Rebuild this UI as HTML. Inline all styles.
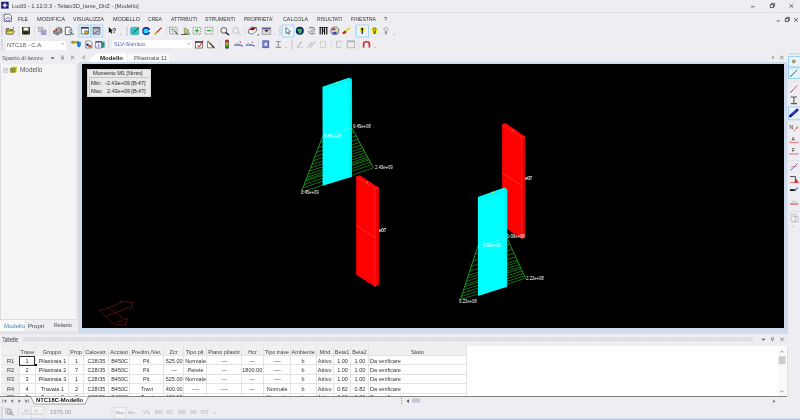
<!DOCTYPE html>
<html><head><meta charset="utf-8">
<style>
*{box-sizing:border-box}
html,body{margin:0;padding:0}
body{width:800px;height:420px;overflow:hidden;position:relative;background:#eeeef2;font-family:"Liberation Sans",sans-serif;color:#1e1e1e}
.a{position:absolute}
body>*{will-change:transform}
.t{position:absolute;white-space:nowrap;line-height:1}
#menu .t{font-size:6.2px;color:#333;top:15.8px;transform-origin:0 0}
.th{font-size:5.5px;color:#444;text-align:center}
.td{font-size:5.8px;color:#333;text-align:center;transform:scaleX(0.95);transform-origin:50% 0}
.tl{transform-origin:0 0}
.lbl{font-size:5.3px;color:#fff;transform:scaleX(0.8);transform-origin:0 0;z-index:3}
svg{position:absolute;left:0;top:0;overflow:visible}
</style></head><body>


<!-- ============ TITLE BAR ============ -->
<div class="t" style="left:12px;top:4px;font-size:5.8px;color:#444">Ludi3 - 1.12.0.3 - Telaio3D_lame_DirZ - [Modello]</div>
<div class="a" style="left:0;top:12px;width:800px;height:1px;background:#dddde6"></div>
<!-- ============ MENU ============ -->
<div id="menu">
<div class="t" style="left:17.7px;transform:scaleX(0.764)">FILE</div>
<div class="t" style="left:36.7px;transform:scaleX(0.924)">MODIFICA</div>
<div class="t" style="left:72.7px;transform:scaleX(0.874)">VISUALIZZA</div>
<div class="t" style="left:112.7px;transform:scaleX(0.891)">MODELLO</div>
<div class="t" style="left:147.7px;transform:scaleX(0.813)">CREA</div>
<div class="t" style="left:170.7px;transform:scaleX(0.824)">ATTRIBUTI</div>
<div class="t" style="left:205.29999999999998px;transform:scaleX(0.835)">STRUMENTI</div>
<div class="t" style="left:244.2px;transform:scaleX(0.802)">PROPRIETA'</div>
<div class="t" style="left:282.7px;transform:scaleX(0.864)">CALCOLA</div>
<div class="t" style="left:316.7px;transform:scaleX(0.825)">RISULTATI</div>
<div class="t" style="left:350.7px;transform:scaleX(0.815)">FINESTRA</div>
<div class="t" style="left:383.7px;transform:scaleX(0.900)">?</div>
</div>
<!-- ============ TOOLBAR combos ============ -->
<div class="a" style="left:4.5px;top:39.5px;width:61.5px;height:10.5px;background:#fff;border:0.5px solid #ececf0"></div>
<div class="t" style="left:7px;top:42.2px;font-size:6px;color:#555">NTC18 - C.A.</div>
<div class="a" style="left:110.5px;top:39.3px;width:82px;height:9.5px;background:#fff;border:0.5px solid #ececf0"></div>
<div class="t" style="left:113.6px;top:42.2px;font-size:5.5px;color:#5151c8">SLV-Sismico</div>

<!-- ============ PANEL HEADER ============ -->
<div class="t" style="left:2px;top:55.5px;font-size:5.8px;color:#555">Spazio di lavoro</div>
<!-- tabs -->
<svg width="800" height="420" style="z-index:1">
  <path d="M88.5,62 L96,53.5 L127,53.5 L127,62 Z" fill="#fff"/>
  <path d="M127.5,62 L127.5,53 L170,53 L170,62" fill="#fafafc" stroke="#e2e2ea" stroke-width="0.5"/>
</svg>
<div class="t" style="left:100px;top:54.8px;font-size:6.1px;font-weight:bold;color:#222;z-index:2">Modello</div>
<div class="t" style="left:134px;top:55.3px;font-size:6px;color:#555;z-index:2">Pilastrata 11</div>

<!-- ============ LEFT PANEL ============ -->
<div class="a" style="left:0;top:64.4px;width:76px;height:255.6px;background:#f5f5f7;border-left:0.5px solid #dcdce2;border-bottom:0.5px solid #dcdce2"></div>
<div class="a" style="left:76px;top:64px;width:2px;height:267px;background:#e7e7eb"></div>
<div class="t" style="left:19.5px;top:67px;font-size:6.4px;color:#555">Modello</div>
<div class="a" style="left:0;top:320px;width:24px;height:10.5px;background:#fafafb"></div>
<div class="a" style="left:24px;top:320px;width:54px;height:10.5px;background:#eeeef2"></div>
<div class="t" style="left:3.5px;top:322.5px;font-size:6px;color:#3d7fb8">Modello</div>
<div class="t" style="left:28.3px;top:322.5px;font-size:6.1px;color:#444">Propri</div>
<div class="t" style="left:53.5px;top:322.7px;font-size:5.3px;color:#444">Relazio</div>

<!-- ============ VIEWPORT ============ -->
<div class="a" style="left:78px;top:64px;width:1px;height:267px;background:#dcdce4"></div>
<div class="a" style="left:79px;top:62px;width:708.5px;height:271.5px;background:#cfdbed"></div>
<div class="a" style="left:82px;top:64px;width:702.4px;height:263.8px;background:#000"></div>

<!-- ============ TABELLE ============ -->
<div class="a" style="left:0;top:331px;width:79px;height:2.5px;background:#e2e2e8"></div>
<div class="t" style="left:2px;top:336.8px;font-size:6.8px;color:#444;transform:scaleX(0.75);transform-origin:0 0">Tabelle</div>
<div class="a" style="left:0;top:345.8px;width:787px;height:50.5px;background:#fff;border-bottom:1px solid #888"></div>

<!-- ============ SHEET TABS / BOTTOM ============ -->
<div class="a" style="left:0;top:418px;width:800px;height:2px;background:#b9cbe6"></div>


<svg width="800" height="420" style="z-index:3">
<defs>
  <pattern id="grip" width="2" height="2" patternUnits="userSpaceOnUse">
    <rect x="0" y="0" width="1" height="1" fill="#c4c4cc"/>
    <rect x="1" y="1" width="1" height="1" fill="#c4c4cc"/>
  </pattern>
</defs>
<!-- title icon -->
<rect x="1.2" y="1.8" width="7.4" height="6.8" fill="#15156a"/>
<path d="M4.9,2.6 L7.8,5.2 L4.9,7.9 L2,5.2 Z" fill="#9b9be0"/>
<path d="M4.9,3.8 L6.4,5.2 L4.9,6.6 L3.4,5.2 Z" fill="#e8e8ff"/>
<!-- window controls -->
<g stroke="#555" stroke-width="0.9" fill="none">
  <line x1="750.9" y1="6.8" x2="754.6" y2="6.8"/>
  <rect x="770.4" y="4.6" width="3" height="3"/>
  <path d="M771.6,4.4 V3.4 H774.6 V6.4 H773.6"/>
  <path d="M789.6,4.1 L793.2,7.6 M793.2,4.1 L789.6,7.6"/>
  <line x1="776.8" y1="20.9" x2="779.8" y2="20.9"/>
  <rect x="785.3" y="18.6" width="3" height="3"/>
  <path d="M786.5,18.4 V17.4 H789.5 V20.4 H788.5"/>
  <path d="M794.2,18.1 L797.9,21.6 M797.9,18.1 L794.2,21.6"/>
</g>
<!-- menu doc icon -->
<path d="M4.2,14.2 H9.6 L11.4,16 V21.4 H4.2 Z" fill="#fff" stroke="#333" stroke-width="0.7"/>
<path d="M5.5,19.5 L8,16.8 L10.3,19.2 L7.8,21 Z" fill="none" stroke="#4a4ad0" stroke-width="0.8"/>
<!-- grips -->
<rect x="1" y="13.5" width="2" height="10" fill="url(#grip)"/>
<rect x="1" y="25.5" width="2" height="11" fill="url(#grip)"/>
<rect x="1" y="39" width="2" height="11" fill="url(#grip)"/>
<rect x="126" y="26" width="2" height="10" fill="url(#grip)"/>
<rect x="279" y="26" width="2" height="10" fill="url(#grip)"/>
<rect x="291" y="39.5" width="2" height="10" fill="url(#grip)"/>
<!-- separators -->
<g fill="#d6d6de">
  <rect x="18.2" y="26" width="0.7" height="10"/>
  <rect x="34.2" y="26" width="0.7" height="10"/>
  <rect x="49.2" y="26" width="0.7" height="10"/>
  <rect x="166.2" y="26" width="0.7" height="10"/>
  <rect x="217.4" y="26" width="0.7" height="10"/>
  <rect x="244" y="26" width="0.7" height="10"/>
  <rect x="355" y="26" width="0.7" height="10"/>
  <rect x="69.6" y="39.5" width="0.7" height="10"/>
  <rect x="108.2" y="39.5" width="0.7" height="10"/>
  <rect x="219.6" y="39.5" width="0.7" height="10"/>
  <rect x="258.3" y="39.5" width="0.7" height="10"/>
  <rect x="331.3" y="39.5" width="0.7" height="10"/>
  <rect x="358.5" y="39.5" width="0.7" height="10"/>
</g>
<!-- selected button boxes -->
<g fill="#e8f4fc" stroke="#98cdee" stroke-width="0.8">
  <rect x="79" y="25" width="11.5" height="12"/>
  <rect x="91" y="25" width="11.8" height="12"/>
  <rect x="282.2" y="25" width="11.8" height="12"/>
  <rect x="356.2" y="25" width="12.3" height="12"/>
</g>
<!-- TOOLBAR 1 icons -->
<!-- open folder -->
<path d="M6.2,28.5 H9 L10,29.5 H13 V34 H6.2 Z" fill="#b5b020" stroke="#333" stroke-width="0.6"/>
<path d="M7,31 H14.5 L13,34 H6.2 Z" fill="#e6e060" stroke="#333" stroke-width="0.5"/>
<circle cx="13.5" cy="27.8" r="0.6" fill="#111"/>
<!-- save -->
<rect x="22" y="27" width="8" height="7.5" fill="#3a3a10"/>
<rect x="23.5" y="27.6" width="5" height="3" fill="#f4f4f0"/>
<rect x="24" y="31.8" width="3.6" height="2.4" fill="#222"/>
<!-- copy -->
<rect x="38.2" y="27.2" width="4.6" height="4.4" fill="#fff" stroke="#6a6a7a" stroke-width="0.5"/>
<path d="M38.8,28.6 H42 M38.8,29.8 H42" stroke="#7a7a9a" stroke-width="0.45"/>
<rect x="41.2" y="30" width="4.8" height="4.5" fill="#e8e8f6" stroke="#4848a8" stroke-width="0.5"/>
<path d="M41.8,31.4 H45.4 M41.8,32.6 H45.4 M41.8,33.6 H45" stroke="#3a3ab8" stroke-width="0.45"/>
<!-- print -->
<path d="M55.5,29.2 L58.5,27.2 L61.8,28.4 L58.8,30.4 Z" fill="#fff" stroke="#222" stroke-width="0.55"/>
<path d="M53.6,31 L58.6,28.6 L62,30 L62,32.4 L57.4,34.8 L53.6,33.2 Z" fill="#b4b4b4" stroke="#222" stroke-width="0.6"/>
<path d="M53.8,31.1 L57.4,32.8 L62,30.3 M57.4,32.8 V34.6" fill="none" stroke="#333" stroke-width="0.5"/>
<circle cx="56.6" cy="30.8" r="0.75" fill="#e02828"/>
<!-- preview -->
<path d="M65.3,27.2 H70 L71,28.2 V34.7 H65.3 Z" fill="#fff" stroke="#222" stroke-width="0.7"/>
<circle cx="70.4" cy="31.5" r="1.6" fill="#bfe4ec" stroke="#2a5a68" stroke-width="0.6"/>
<path d="M71.5,32.6 L73.6,35" stroke="#222" stroke-width="0.8"/>
<!-- selected icon 1 -->
<rect x="81.2" y="27.2" width="7.2" height="6.8" fill="#fff" stroke="#333" stroke-width="0.6"/>
<rect x="81.2" y="27.2" width="7.2" height="1.4" fill="#1c2a6a"/>
<circle cx="86.2" cy="32.3" r="1.8" fill="#c8c020" stroke="#333" stroke-width="0.5"/>
<!-- selected icon 2 -->
<rect x="93" y="27.2" width="7" height="7" fill="#bcbcc8" stroke="#444" stroke-width="0.6"/>
<rect x="93" y="27.2" width="7" height="1.3" fill="#555"/>
<path d="M93.5,33.5 L99.5,30.5" stroke="#3a3ad0" stroke-width="0.7"/>
<path d="M99.5,28.5 L100.6,29.5" stroke="#d03030" stroke-width="0.7"/>
<!-- help arrow -->
<path d="M108.8,27 L108.8,33 L110.3,31.8 L111.6,33.8 L112.4,33.3 L111.3,31.3 L113,31.1 Z" fill="#111"/>
<text x="112.2" y="32.6" font-size="6.5" font-weight="bold" fill="#222" font-family="Liberation Sans">?</text>
<path d="M120.4,34 h1.4 l-0.7,0.7z" fill="#555"/>
<!-- teal cube/pen -->
<rect x="130.6" y="27.3" width="8.2" height="7.5" rx="1.5" fill="#30c8c8" stroke="#2a7a7a" stroke-width="0.4"/>
<path d="M131.5,34.5 L138.8,27.5" stroke="#222" stroke-width="0.9"/>
<path d="M131.3,34.6 L133,33" stroke="#e0e030" stroke-width="0.8"/>
<!-- globe -->
<circle cx="146.2" cy="31" r="3.9" fill="#0a1e9a"/>
<circle cx="146" cy="31" r="2.6" fill="#20d8f0"/>
<rect x="148.6" y="30" width="2" height="2.2" fill="#eeeef2"/>
<!-- pencil -->
<path d="M154.5,34.6 L161.5,27.6" stroke="#b02020" stroke-width="1.2"/>
<path d="M154.2,34.9 L156.5,32.6" stroke="#e0d040" stroke-width="1.3"/>
<!-- select grid -->
<g fill="none" stroke="#333" stroke-width="0.6" stroke-dasharray="1,0.8">
  <rect x="169.6" y="27.3" width="7.4" height="6.6"/>
</g>
<path d="M170.5,29.5 H176 M172.5,28 V33" stroke="#5a5" stroke-width="0.5"/>
<path d="M174,30.5 L178,34.7" stroke="#111" stroke-width="0.9"/>
<!-- hand/paint -->
<path d="M181.2,34.5 H187" stroke="#111" stroke-width="0.7"/>
<path d="M184,29 C184,27.5 186,27.5 186,29 L188.5,30 L188,33.5 H184.5 Z" fill="#c9c960" stroke="#555" stroke-width="0.5"/>
<rect x="187.6" y="33.2" width="2.2" height="1.8" fill="#20b0a0"/>
<!-- + box -->
<rect x="193.2" y="27.3" width="7.6" height="6.8" fill="none" stroke="#444" stroke-width="0.6" stroke-dasharray="1,0.9"/>
<path d="M195,30.7 H199 M197,28.7 V32.7" stroke="#20a020" stroke-width="1.1"/>
<!-- - box -->
<rect x="205.2" y="27.3" width="7.6" height="6.8" fill="none" stroke="#444" stroke-width="0.6" stroke-dasharray="1,0.9"/>
<path d="M206.8,30.7 H211.2" stroke="#20a020" stroke-width="1.1"/>
<!-- zoom in -->
<circle cx="223.8" cy="30.4" r="2.9" fill="#e8f4e8" stroke="#444" stroke-width="0.9"/>
<path d="M225.8,32.4 L229,35" stroke="#111" stroke-width="1.3"/>
<!-- zoom out grey -->
<circle cx="235.6" cy="30.4" r="2.9" fill="none" stroke="#b0b0b0" stroke-width="0.7"/>
<path d="M237.6,32.4 L240.8,35" stroke="#aaa" stroke-width="0.9"/>
<!-- 3D house -->
<path d="M248.4,30 L251.5,27.2 L256.5,27.5 L256.5,31 L252.5,34.2 L248.4,33 Z" fill="#f4f4f4" stroke="#333" stroke-width="0.6"/>
<path d="M249,30 L252,27.4 L256.4,27.5 L253.5,30.3 Z" fill="#8a1010"/>
<path d="M257.2,35.4 L258.8,33.8 V35.4 Z" fill="#333"/>
<!-- screen -->
<rect x="262" y="27.6" width="8.8" height="6.8" fill="#d6d6d6" stroke="#777" stroke-width="0.5"/>
<rect x="262.5" y="28.3" width="7.8" height="1" fill="#1c2a8a"/>
<path d="M264.5,30 H268.5 L266.5,32.3 Z" fill="#6a1010"/>
<path d="M273.5,34.4 h1.4 l-0.7,0.7z" fill="#555"/>
<!-- arrow select (selected) -->
<path d="M286,27.4 L286,33.6 L287.5,32.3 L288.7,34.4 L289.6,33.9 L288.5,31.9 L290.4,31.8 Z" fill="#fff" stroke="#222" stroke-width="0.6"/>
<!-- green globe -->
<circle cx="299.8" cy="30.8" r="4" fill="#0c1a6a"/>
<path d="M296.5,30 L299,28.5 L302,29 L301.5,33 L299,34 L298.5,31.5 Z" fill="#30c040"/>
<!-- rotate -->
<path d="M309,28.5 C309,27 313,27 314.5,28.2 M308.6,31 C308.6,33.5 312,35 315,33" fill="none" stroke="#333" stroke-width="0.7"/>
<path d="M311.5,29.5 H315.5 M311.5,31.2 H315 M310.5,30 L312.5,33" stroke="#555" stroke-width="0.5"/>
<!-- grid bars -->
<rect x="319.6" y="27" width="7.8" height="7.5" fill="#fff"/>
<g fill="#111"><rect x="319.6" y="27" width="1.2" height="7.5"/><rect x="321.8" y="27" width="1.2" height="7.5"/><rect x="324" y="27" width="1.2" height="7.5"/><rect x="326.2" y="27" width="1.2" height="7.5"/><rect x="319.6" y="27" width="7.8" height="0.8"/></g>
<rect x="323" y="29" width="1" height="3.5" fill="#20b0b0"/>
<!-- ball -->
<circle cx="334.8" cy="30.9" r="4" fill="#ddd" stroke="#333" stroke-width="0.6"/>
<path d="M331.5,29.3 C333,28 335,28 336,29.5 L333,30.5 Z" fill="#c02020"/>
<path d="M332,33 C333.5,34.5 336,34.5 337.5,33 L335,31.5 Z" fill="#3040c0"/>
<path d="M336.5,29.5 L338.5,31.5 L336.5,32 Z" fill="#e0e020"/>
<!-- red eraser -->
<path d="M343,33.3 L349.8,27.8" stroke="#e0e020" stroke-width="2.2"/>
<path d="M343,33.6 L345.8,31.4" stroke="#d02020" stroke-width="2.4"/>
<!-- selected bulb -->
<circle cx="362.3" cy="29.6" r="2.6" fill="#f0f020"/>
<path d="M361.2,28.2 C362,27.3 363.4,27.8 363.2,29.2 L362.7,31 L362.9,34 H361.6 L361.7,31 Z" fill="#111"/>
<!-- yellow bulb -->
<circle cx="374.6" cy="30.3" r="3.4" fill="#f4f420" opacity="0.9"/>
<path d="M373,29.3 C373,27.6 376.2,27.6 376.2,29.3 L375.2,31 V33.5 H374 V31 Z" fill="none" stroke="#111" stroke-width="0.7"/>
<!-- grey bulb -->
<path d="M384,29.3 C384,27.3 388,27.3 388,29.3 L386.6,31.2 V34 H385.4 V31.2 Z" fill="#fff" stroke="#666" stroke-width="0.7"/>
<path d="M393.7,34.3 h1.4 l-0.7,0.7z" fill="#555"/>

<!-- TOOLBAR 2 icons -->
<path d="M61.8,43.6 h2 l-1,1z" fill="#444"/>
<path d="M187.8,43.6 h2 l-1,1z" fill="#444"/>
<!-- key/shield -->
<rect x="72" y="41.5" width="5.5" height="1.6" fill="#c8b820" stroke="#555" stroke-width="0.3"/>
<circle cx="72.6" cy="42.3" r="1" fill="#c8b820" stroke="#444" stroke-width="0.4"/>
<path d="M77,41 L80.8,42 L80.8,45 C80.8,46.5 79,47.4 78.9,47.4 C78.5,47.4 77,46.5 77,45 Z" fill="#2080e0"/>
<!-- doc w/ red -->
<path d="M85.8,41 H90.3 L92,42.7 V48 H85.8 Z" fill="#fff" stroke="#444" stroke-width="0.6"/>
<rect x="86.5" y="43.5" width="2.2" height="2.5" fill="#1a2a8a"/>
<rect x="88.6" y="45" width="2.6" height="2.5" fill="#d04020"/>
<!-- door calendar -->
<rect x="95.8" y="41.4" width="5.8" height="6.6" fill="#fff" stroke="#444" stroke-width="0.6"/>
<rect x="95.8" y="41.4" width="5.8" height="1.2" fill="#3a3a90"/>
<path d="M98.7,43.6 V46.5 M97.6,45.5 L98.7,46.5 L99.8,45.5" stroke="#2a2ac0" stroke-width="0.5" fill="none"/>
<path d="M101.2,42 L104.6,41.4 V47.6 L101.2,48 Z" fill="#2a9090"/>
<!-- red check calendar -->
<rect x="195.4" y="41.6" width="7.2" height="6.4" fill="#fff" stroke="#444" stroke-width="0.7"/>
<rect x="195.4" y="41.6" width="7.2" height="1.3" fill="#444"/>
<path d="M197.5,45 L199.3,47 L203,40.6" stroke="#e01818" stroke-width="1" fill="none"/>
<!-- pencil triangle -->
<path d="M207.6,47.8 L207.6,41.5 L214.5,47.8 Z" fill="#fff" stroke="#333" stroke-width="0.6"/>
<path d="M208,41 L214,47.6" stroke="#111" stroke-width="1.1"/>
<path d="M208,41 L210,43.2" stroke="#e0a020" stroke-width="1.2"/>
<!-- traffic light -->
<rect x="225.3" y="39.8" width="3.5" height="8.8" rx="1" fill="#333"/>
<rect x="225.8" y="40.4" width="2.5" height="2.2" fill="#e02020"/>
<rect x="225.8" y="42.6" width="2.5" height="2.2" fill="#f0c020"/>
<rect x="225.8" y="44.8" width="2.5" height="2.4" fill="#20b030"/>
<rect x="225.8" y="47.2" width="2.5" height="1.2" fill="#206060"/>
<!-- arrows + -->
<path d="M234.2,45.4 L236.5,43.5 L238,44.8 L240.5,44.8 L242.6,46.8" fill="none" stroke="#3a60d0" stroke-width="0.9"/>
<path d="M234.2,45.5 H243" stroke="#3a60d0" stroke-width="0.6"/>
<path d="M239.3,42.2 H241.3 M240.3,41.2 V43.2" stroke="#e03030" stroke-width="0.6"/>
<!-- arrows - -->
<path d="M246,45.4 L248.3,43.5 L249.8,44.8 L252.3,44.8 L254.4,46.8" fill="none" stroke="#3a60d0" stroke-width="0.9"/>
<path d="M246,45.5 H255" stroke="#3a60d0" stroke-width="0.6"/>
<path d="M251.2,42.2 H253.4" stroke="#e03030" stroke-width="0.6"/>
<!-- blue doc -->
<rect x="262.8" y="40.8" width="6" height="7" fill="#7a80c8" stroke="#3a40a0" stroke-width="0.6"/>
<rect x="264.6" y="42.8" width="2.4" height="3" fill="#e8e8ff"/>
<!-- I beam grey -->
<path d="M275.8,41.5 H281 M278.4,41.5 V47.4 M275.8,47.4 H281" stroke="#999" stroke-width="1.1"/>
<path d="M285.3,47 h1.4 l-0.7,0.7z" fill="#555"/>
<!-- grey pencil -->
<path d="M297,47.3 L301.8,41.2" stroke="#bbb" stroke-width="1.1"/>
<path d="M297,47.4 H303.6" stroke="#bbb" stroke-width="0.6"/>
<path d="M307.4,47.6 L312,42 M310,47.6 L315.4,41" stroke="#bbb" stroke-width="1.1"/>
<rect x="320.6" y="41.2" width="5" height="6.4" fill="none" stroke="#c0c0c0" stroke-width="0.6"/>
<!-- grey icons -->
<path d="M336.5,41.2 H342.5 M336.5,41.2 V47.5 H341" stroke="#b8b8b8" stroke-width="0.7" fill="none"/>
<path d="M338,43 L343,43 M341,45.5 V47.8" stroke="#ccc" stroke-width="0.5"/>
<rect x="347.2" y="40.8" width="7.5" height="7" fill="none" stroke="#aaa" stroke-width="0.8"/>
<rect x="347.2" y="40.8" width="7.5" height="1.5" fill="#bbb"/>
<!-- magnet -->
<path d="M363.6,47.2 V44 C363.6,41 369.4,41 369.4,44 V47.2" fill="none" stroke="#d82020" stroke-width="1.6"/>
<path d="M363.6,46.4 V48 M369.4,46.4 V48" stroke="#999" stroke-width="1.6"/>
<path d="M374.4,47.3 h1.4 l-0.7,0.7z" fill="#555"/>

<!-- PANEL HEADER icons -->
<path d="M50.6,57.2 H54.6 L52.6,59.2 Z" fill="#555"/>
<g stroke="#777" stroke-width="0.6" fill="none">
  <path d="M61.6,55.5 V58.3 H63.4 V55.5 M61,58.3 H64 M62.5,58.3 V60.3"/>
  <path d="M70.8,55.6 L74.2,59.2 M74.2,55.6 L70.8,59.2" stroke="#666" stroke-width="0.7"/>
  <path d="M84.8,55.6 L83.1,57.4 L84.8,59.2" stroke="#555" stroke-width="0.8"/>
  <path d="M772.3,55.5 V59.5 L774.5,57.5 Z" fill="#999" stroke="none"/>
  <path d="M780,55.8 L783.4,59.2 M783.4,55.8 L780,59.2" stroke="#666" stroke-width="0.7"/>
</g>
<!-- tree expand box + icon -->
<rect x="3.6" y="68.3" width="4.3" height="3.9" fill="#eef0f8" stroke="#a8aabb" stroke-width="0.5"/>
<path d="M4.6,70.25 H6.9" stroke="#555" stroke-width="0.5"/>
<path d="M11.8,67.6 L13.4,66.4 H17 V71.2 L15.4,72.4 Z" fill="#d6d640"/>
<rect x="10.2" y="67.8" width="5.3" height="5" rx="1" fill="#7c7c10"/>
<path d="M11.7,72.6 V70 C11.7,68.8 14,68.8 14,70 V72.6" fill="none" stroke="#c8c850" stroke-width="0.7"/>
</svg>

<svg width="800" height="420" style="z-index:2">
<g fill="none" stroke="#801414" stroke-width="0.65">
<path d="M99.5,311 L121,303 L120.5,301 L133,302.7 L130.6,309.6 L128.6,307.4 L106.5,316.4"/>
<path d="M99.5,311 L113.6,323.7 L125.3,325.4 L127.4,318.5 L124.6,319.6 L109.6,308.3"/>
<path d="M116.8,321.7 L123.3,320.9"/>
</g>
<g stroke="#24c024" stroke-width="0.58">
<line x1="320.38" y1="142.31" x2="353.96" y2="131.98"/>
<line x1="318.25" y1="147.86" x2="356.12" y2="135.96"/>
<line x1="316.55" y1="152.30" x2="357.85" y2="139.14"/>
<line x1="314.85" y1="156.75" x2="359.58" y2="142.33"/>
<line x1="313.36" y1="160.64" x2="361.09" y2="145.11"/>
<line x1="311.88" y1="164.53" x2="362.60" y2="147.90"/>
<line x1="310.60" y1="167.86" x2="363.90" y2="150.29"/>
<line x1="309.32" y1="171.19" x2="365.19" y2="152.68"/>
<line x1="308.05" y1="174.52" x2="366.49" y2="155.06"/>
<line x1="306.99" y1="177.30" x2="367.57" y2="157.05"/>
<line x1="306.14" y1="179.52" x2="368.43" y2="158.65"/>
<line x1="305.50" y1="181.19" x2="369.08" y2="159.84"/>
<line x1="304.23" y1="184.52" x2="370.38" y2="162.23"/>
<line x1="302.95" y1="187.86" x2="371.67" y2="164.62"/>
<line x1="301.25" y1="192.30" x2="373.40" y2="167.80"/>
<path d="M322.5,136.75 L301.25,192.3 M351.8,128.0 L373.4,167.8" stroke="#2ad02a" stroke-width="0.7"/>
</g>
<path d="M322.5,86.7 L348.7,77.7 L351.5,79 L351.8,176.8 L322.6,185.8 Z" fill="#00ffff"/>
<path d="M348.7,77.7 L351.8,79 L351.8,176.8 L349,177.6 Z" fill="#00f2f2"/>
<path d="M325.3,88.2 L351.5,79.2" stroke="#18c8c8" stroke-width="0.45"/>
<circle cx="337" cy="82.6" r="0.8" fill="#b0f050"/>
<line x1="322.5" y1="136.75" x2="351.8" y2="128" stroke="#a0f0e0" stroke-width="0.4"/>
<path d="M356.2,176.6 L359.9,175.3 L378.6,187.6 L378.8,284.6 L375.2,286.8 L356.2,274.8 Z" fill="#ff0000"/>
<path d="M375,188.9 L378.6,187.6 L378.8,284.6 L375.2,286.8 Z" fill="#ee0000"/>
<path d="M356.4,176.8 L375,188.9 L378.6,187.6" fill="none" stroke="#ff5a5a" stroke-width="0.4"/>
<line x1="356.2" y1="225" x2="375" y2="237.6" stroke="#ff8080" stroke-width="0.35"/>
<line x1="375" y1="188.9" x2="375.1" y2="286.8" stroke="#ff6060" stroke-width="0.3"/>
<circle cx="367" cy="182.2" r="0.7" fill="#ff9a40"/>
<path d="M502.1,124.6 L505.7,123.1 L524.8,136.2 L524.8,236.5 L522,238.8 L502.2,226 Z" fill="#ff0000"/>
<path d="M521.8,137.6 L524.8,136.2 L524.8,236.5 L522,238.8 Z" fill="#ee0000"/>
<path d="M502.3,124.8 L521.8,137.6 L524.8,136.2" fill="none" stroke="#ff5a5a" stroke-width="0.4"/>
<line x1="502.2" y1="172.9" x2="521.8" y2="185.7" stroke="#ff8080" stroke-width="0.35"/>
<line x1="521.8" y1="137.6" x2="522" y2="238.8" stroke="#ff6060" stroke-width="0.3"/>
<circle cx="513.2" cy="130.4" r="0.7" fill="#ff9a40"/>
<g stroke="#24c024" stroke-width="0.58">
<line x1="475.27" y1="254.04" x2="509.77" y2="244.03"/>
<line x1="473.00" y1="261.01" x2="512.18" y2="249.26"/>
<line x1="471.25" y1="266.37" x2="514.03" y2="253.28"/>
<line x1="469.67" y1="271.19" x2="515.70" y2="256.89"/>
<line x1="468.27" y1="275.48" x2="517.17" y2="260.11"/>
<line x1="467.40" y1="278.16" x2="518.10" y2="262.12"/>
<line x1="466.35" y1="281.38" x2="519.21" y2="264.53"/>
<line x1="465.30" y1="284.59" x2="520.32" y2="266.94"/>
<line x1="464.60" y1="286.74" x2="521.06" y2="268.55"/>
<line x1="463.55" y1="289.95" x2="522.17" y2="270.96"/>
<line x1="462.50" y1="293.17" x2="523.28" y2="273.38"/>
<line x1="461.45" y1="296.38" x2="524.39" y2="275.79"/>
<line x1="460.40" y1="299.60" x2="525.50" y2="278.20"/>
<path d="M477.9,246.0 L460.4,299.6 M507.0,238.0 L525.5,278.2" stroke="#2ad02a" stroke-width="0.7"/>
</g>
<path d="M477.9,197 L504.5,187.6 L507.2,189.5 L507.1,286.8 L478,296 Z" fill="#00ffff"/>
<path d="M504.5,187.6 L507.2,189.5 L507.1,286.8 L505,287.5 Z" fill="#00f2f2"/><path d="M480,198.4 L507,189.6" stroke="#18c8c8" stroke-width="0.45"/><circle cx="492.5" cy="192.4" r="0.8" fill="#b0f050"/>
<line x1="477.9" y1="246" x2="507" y2="238" stroke="#a0f0e0" stroke-width="0.4"/>
</svg>
<div class="a" style="left:86.6px;top:69.1px;width:64.3px;height:28px;background:#e9e9ea;border:0.6px solid #d6d6d8;z-index:3"></div>
<div class="a" style="left:88.6px;top:77.3px;width:59.6px;height:18.8px;border-top:0.7px solid #c4c4c8;border-left:0.7px solid #c4c4c8;z-index:3"></div>
<div class="t" style="left:93.4px;top:70.6px;font-size:5.9px;color:#1e1e1e;z-index:4;transform:scaleX(0.93);transform-origin:0 0">Momento M1 [Nmm]</div>
<div class="t" style="left:90.5px;top:81px;font-size:5.9px;color:#1e1e1e;z-index:4;transform:scaleX(0.93);transform-origin:0 0">Min:</div>
<div class="t" style="left:90.5px;top:88.9px;font-size:5.9px;color:#1e1e1e;z-index:4;transform:scaleX(0.93);transform-origin:0 0">Max:</div>
<div class="t" style="left:105.2px;top:81px;font-size:5.9px;color:#1e1e1e;z-index:4;transform:scaleX(0.93);transform-origin:0 0">-2.43e+09 [B:47]</div>
<div class="t" style="left:107.4px;top:88.9px;font-size:5.9px;color:#1e1e1e;z-index:4;transform:scaleX(0.93);transform-origin:0 0">2.43e+09 [B:47]</div>

<div class="t lbl" style="left:352.5px;top:123.6px">9.45e+08</div>
<div class="t lbl" style="left:324.2px;top:133.8px">9.45e+08</div>
<div class="t lbl" style="left:374.6px;top:164.6px">2.43e+09</div>
<div class="t lbl" style="left:300.8px;top:189.6px">2.45e+09</div>
<div class="t lbl" style="left:378.6px;top:228.4px;font-weight:bold">e07</div>
<div class="t lbl" style="left:524.8px;top:176.4px;font-weight:bold">e07</div>
<div class="t lbl" style="left:507px;top:233.6px">9.08e+08</div>
<div class="t lbl" style="left:482.5px;top:243.2px">9.08e+08</div>
<div class="t lbl" style="left:526.3px;top:275.6px">2.22e+08</div>
<div class="t lbl" style="left:459.3px;top:298.6px">9.22e+08</div>
<div class="a" style="left:0;top:0;width:800px;height:396.4px;overflow:hidden">
<div class="a" style="left:0.5px;top:346px;width:466px;height:9.6px;background:#f0f0f0"></div>
<div class="a" style="left:0.5px;top:355.6px;width:18.9px;height:41px;background:#f0f0f0"></div>
<div class="a" style="left:18.9px;top:346px;width:0.8px;height:50px;background:#e3e3e3"></div>
<div class="a" style="left:35.1px;top:346px;width:0.8px;height:50px;background:#e3e3e3"></div>
<div class="a" style="left:68.0px;top:346px;width:0.8px;height:50px;background:#e3e3e3"></div>
<div class="a" style="left:83.1px;top:346px;width:0.8px;height:50px;background:#e3e3e3"></div>
<div class="a" style="left:108.0px;top:346px;width:0.8px;height:50px;background:#e3e3e3"></div>
<div class="a" style="left:129.2px;top:346px;width:0.8px;height:50px;background:#e3e3e3"></div>
<div class="a" style="left:163.0px;top:346px;width:0.8px;height:50px;background:#e3e3e3"></div>
<div class="a" style="left:183.2px;top:346px;width:0.8px;height:50px;background:#e3e3e3"></div>
<div class="a" style="left:206.3px;top:346px;width:0.8px;height:50px;background:#e3e3e3"></div>
<div class="a" style="left:240.8px;top:346px;width:0.8px;height:50px;background:#e3e3e3"></div>
<div class="a" style="left:263.3px;top:346px;width:0.8px;height:50px;background:#e3e3e3"></div>
<div class="a" style="left:289.5px;top:346px;width:0.8px;height:50px;background:#e3e3e3"></div>
<div class="a" style="left:315.8px;top:346px;width:0.8px;height:50px;background:#e3e3e3"></div>
<div class="a" style="left:333.0px;top:346px;width:0.8px;height:50px;background:#e3e3e3"></div>
<div class="a" style="left:350.1px;top:346px;width:0.8px;height:50px;background:#e3e3e3"></div>
<div class="a" style="left:367.9px;top:346px;width:0.8px;height:50px;background:#e3e3e3"></div>
<div class="a" style="left:465.8px;top:346px;width:0.8px;height:50px;background:#e3e3e3"></div>
<div class="a" style="left:0.5px;top:355.0px;width:466px;height:0.8px;background:#e3e3e3"></div>
<div class="a" style="left:0.5px;top:364.4px;width:466px;height:0.8px;background:#e3e3e3"></div>
<div class="a" style="left:0.5px;top:373.8px;width:466px;height:0.8px;background:#e3e3e3"></div>
<div class="a" style="left:0.5px;top:383.2px;width:466px;height:0.8px;background:#e3e3e3"></div>
<div class="a" style="left:0.5px;top:392.6px;width:466px;height:0.8px;background:#e3e3e3"></div>
<div class="t th" style="left:19.4px;width:16.2px;top:349.6px">Trave</div>
<div class="t th" style="left:35.6px;width:32.9px;top:349.6px">Gruppo</div>
<div class="t th" style="left:68.5px;width:15.1px;top:349.6px">Prop</div>
<div class="t th" style="left:83.6px;width:24.9px;top:349.6px">Calcestr.</div>
<div class="t th" style="left:108.5px;width:21.2px;top:349.6px">Acciaio</div>
<div class="t th" style="left:129.7px;width:33.8px;top:349.6px">Predim./Ver.</div>
<div class="t th" style="left:163.5px;width:20.2px;top:349.6px">Zcr</div>
<div class="t th" style="left:183.7px;width:23.1px;top:349.6px">Tipo pil.</div>
<div class="t th" style="left:206.8px;width:34.5px;top:349.6px">Piano pilastri</div>
<div class="t th" style="left:241.3px;width:22.5px;top:349.6px">Hcr</div>
<div class="t th" style="left:263.8px;width:26.2px;top:349.6px">Tipo trave</div>
<div class="t th" style="left:290.0px;width:26.3px;top:349.6px">Ambiente</div>
<div class="t th" style="left:316.3px;width:17.2px;top:349.6px">Mrid</div>
<div class="t th" style="left:333.5px;width:17.1px;top:349.6px">Beta1</div>
<div class="t th" style="left:350.6px;width:17.8px;top:349.6px">Beta2</div>
<div class="t th" style="left:368.4px;width:97.9px;top:349.6px">Stato</div>
<div class="t td" style="left:0.5px;width:18.9px;top:358.6px">R1</div>
<div class="t td" style="left:19.4px;width:16.2px;top:358.6px">1</div>
<div class="t td" style="left:35.6px;width:32.9px;top:358.6px">Pilastrata 1</div>
<div class="t td" style="left:68.5px;width:15.1px;top:358.6px">1</div>
<div class="t td" style="left:83.6px;width:24.9px;top:358.6px">C28/35</div>
<div class="t td" style="left:108.5px;width:21.2px;top:358.6px">B450C</div>
<div class="t td" style="left:129.7px;width:33.8px;top:358.6px">Pil.</div>
<div class="t td" style="left:163.5px;width:20.2px;top:358.6px">525.00</div>
<div class="t td" style="left:183.7px;width:23.1px;top:358.6px">Normale</div>
<div class="t td" style="left:206.8px;width:34.5px;top:358.6px">---</div>
<div class="t td" style="left:241.3px;width:22.5px;top:358.6px">---</div>
<div class="t td" style="left:263.8px;width:26.2px;top:358.6px">----</div>
<div class="t td" style="left:290.0px;width:26.3px;top:358.6px">b</div>
<div class="t td" style="left:316.3px;width:17.2px;top:358.6px">Attivo</div>
<div class="t td" style="left:333.5px;width:17.1px;top:358.6px">1.00</div>
<div class="t td" style="left:350.6px;width:17.8px;top:358.6px">1.00</div>
<div class="t td tl" style="left:369.7px;top:358.6px">Da verificare</div>
<div class="t td" style="left:0.5px;width:18.9px;top:368.0px">R2</div>
<div class="t td" style="left:19.4px;width:16.2px;top:368.0px">2</div>
<div class="t td" style="left:35.6px;width:32.9px;top:368.0px">Pilastrata 2</div>
<div class="t td" style="left:68.5px;width:15.1px;top:368.0px">7</div>
<div class="t td" style="left:83.6px;width:24.9px;top:368.0px">C28/35</div>
<div class="t td" style="left:108.5px;width:21.2px;top:368.0px">B450C</div>
<div class="t td" style="left:129.7px;width:33.8px;top:368.0px">Pil.</div>
<div class="t td" style="left:163.5px;width:20.2px;top:368.0px">---</div>
<div class="t td" style="left:183.7px;width:23.1px;top:368.0px">Parete</div>
<div class="t td" style="left:206.8px;width:34.5px;top:368.0px">---</div>
<div class="t td" style="left:241.3px;width:22.5px;top:368.0px">1800.00</div>
<div class="t td" style="left:263.8px;width:26.2px;top:368.0px">----</div>
<div class="t td" style="left:290.0px;width:26.3px;top:368.0px">b</div>
<div class="t td" style="left:316.3px;width:17.2px;top:368.0px">Attivo</div>
<div class="t td" style="left:333.5px;width:17.1px;top:368.0px">1.00</div>
<div class="t td" style="left:350.6px;width:17.8px;top:368.0px">1.00</div>
<div class="t td tl" style="left:369.7px;top:368.0px">Da verificare</div>
<div class="t td" style="left:0.5px;width:18.9px;top:377.4px">R3</div>
<div class="t td" style="left:19.4px;width:16.2px;top:377.4px">3</div>
<div class="t td" style="left:35.6px;width:32.9px;top:377.4px">Pilastrata 3</div>
<div class="t td" style="left:68.5px;width:15.1px;top:377.4px">1</div>
<div class="t td" style="left:83.6px;width:24.9px;top:377.4px">C28/35</div>
<div class="t td" style="left:108.5px;width:21.2px;top:377.4px">B450C</div>
<div class="t td" style="left:129.7px;width:33.8px;top:377.4px">Pil.</div>
<div class="t td" style="left:163.5px;width:20.2px;top:377.4px">525.00</div>
<div class="t td" style="left:183.7px;width:23.1px;top:377.4px">Normale</div>
<div class="t td" style="left:206.8px;width:34.5px;top:377.4px">---</div>
<div class="t td" style="left:241.3px;width:22.5px;top:377.4px">---</div>
<div class="t td" style="left:263.8px;width:26.2px;top:377.4px">----</div>
<div class="t td" style="left:290.0px;width:26.3px;top:377.4px">b</div>
<div class="t td" style="left:316.3px;width:17.2px;top:377.4px">Attivo</div>
<div class="t td" style="left:333.5px;width:17.1px;top:377.4px">1.00</div>
<div class="t td" style="left:350.6px;width:17.8px;top:377.4px">1.00</div>
<div class="t td tl" style="left:369.7px;top:377.4px">Da verificare</div>
<div class="t td" style="left:0.5px;width:18.9px;top:386.8px">R4</div>
<div class="t td" style="left:19.4px;width:16.2px;top:386.8px">4</div>
<div class="t td" style="left:35.6px;width:32.9px;top:386.8px">Travata 1</div>
<div class="t td" style="left:68.5px;width:15.1px;top:386.8px">2</div>
<div class="t td" style="left:83.6px;width:24.9px;top:386.8px">C28/35</div>
<div class="t td" style="left:108.5px;width:21.2px;top:386.8px">B450C</div>
<div class="t td" style="left:129.7px;width:33.8px;top:386.8px">Travi</div>
<div class="t td" style="left:163.5px;width:20.2px;top:386.8px">400.00</div>
<div class="t td" style="left:183.7px;width:23.1px;top:386.8px">----</div>
<div class="t td" style="left:206.8px;width:34.5px;top:386.8px">----</div>
<div class="t td" style="left:241.3px;width:22.5px;top:386.8px">---</div>
<div class="t td" style="left:263.8px;width:26.2px;top:386.8px">Normale</div>
<div class="t td" style="left:290.0px;width:26.3px;top:386.8px">b</div>
<div class="t td" style="left:316.3px;width:17.2px;top:386.8px">Attivo</div>
<div class="t td" style="left:333.5px;width:17.1px;top:386.8px">0.82</div>
<div class="t td" style="left:350.6px;width:17.8px;top:386.8px">0.82</div>
<div class="t td tl" style="left:369.7px;top:386.8px">Da verificare</div>
<div class="t td" style="left:0.5px;width:18.9px;top:395.1px">R5</div>
<div class="t td" style="left:19.4px;width:16.2px;top:395.1px">5</div>
<div class="t td" style="left:35.6px;width:32.9px;top:395.1px">Travata 2</div>
<div class="t td" style="left:68.5px;width:15.1px;top:395.1px">2</div>
<div class="t td" style="left:83.6px;width:24.9px;top:395.1px">C28/35</div>
<div class="t td" style="left:108.5px;width:21.2px;top:395.1px">B450C</div>
<div class="t td" style="left:129.7px;width:33.8px;top:395.1px">Travi</div>
<div class="t td" style="left:163.5px;width:20.2px;top:395.1px">400.00</div>
<div class="t td" style="left:183.7px;width:23.1px;top:395.1px">----</div>
<div class="t td" style="left:206.8px;width:34.5px;top:395.1px">----</div>
<div class="t td" style="left:241.3px;width:22.5px;top:395.1px">---</div>
<div class="t td" style="left:263.8px;width:26.2px;top:395.1px">Normale</div>
<div class="t td" style="left:290.0px;width:26.3px;top:395.1px">b</div>
<div class="t td" style="left:316.3px;width:17.2px;top:395.1px">Attivo</div>
<div class="t td" style="left:333.5px;width:17.1px;top:395.1px">0.82</div>
<div class="t td" style="left:350.6px;width:17.8px;top:395.1px">0.82</div>
<div class="t td tl" style="left:369.7px;top:395.1px">Da verificare</div>
</div>

<!-- selected cell -->
<div class="a" style="left:19.2px;top:355.6px;width:16.4px;height:9.5px;border:1px solid #333;z-index:3"></div>
<div class="a" style="left:34.6px;top:364.2px;width:1.6px;height:1.6px;background:#111;z-index:3"></div>
<!-- table outer border right -->
<div class="a" style="left:786.6px;top:346px;width:0.6px;height:50.5px;background:#dcdce4"></div>
<!-- tab bar line -->
<div class="a" style="left:0;top:396px;width:787.2px;height:0.8px;background:#828282;z-index:3"></div>
<svg width="800" height="420" style="z-index:4">
<defs>
  <pattern id="grip2" width="2" height="2" patternUnits="userSpaceOnUse">
    <rect x="0" y="0" width="1" height="1" fill="#c4c4cc"/>
    <rect x="1" y="1" width="1" height="1" fill="#c4c4cc"/>
  </pattern>
  <pattern id="chain" width="3" height="3.2" patternUnits="userSpaceOnUse">
    <circle cx="1.5" cy="1.6" r="1.05" fill="none" stroke="#b9b9c2" stroke-width="0.6"/>
  </pattern>
</defs>
<!-- Tabelle grip -->
<rect x="23" y="337.6" width="730" height="3.2" fill="url(#chain)"/>
<path d="M761.6,338.8 H765.4 L763.5,340.8 Z" fill="#555"/>
<path d="M771.6,336.8 V339.6 H773.4 V336.8 M771,339.6 H774 M772.5,339.6 V341.6" stroke="#777" stroke-width="0.6" fill="none"/>
<path d="M780.3,337.6 L783.7,341.2 M783.7,337.6 L780.3,341.2" stroke="#666" stroke-width="0.7"/>
<!-- scrollbar -->
<rect x="778.2" y="346.5" width="7.8" height="49.5" fill="#f9f9f9"/>
<path d="M780.4,352.4 L782,350.8 L783.6,352.4" fill="none" stroke="#555" stroke-width="0.6"/>
<rect x="778.6" y="356.3" width="7" height="8" fill="#cdcdcd"/>
<path d="M780.4,390.6 L782,392.2 L783.6,390.6" fill="none" stroke="#555" stroke-width="0.6"/>
<!-- sheet tab -->
<path d="M30.6,396.4 L34.4,404 L85,404 L88.8,396.4" fill="#fff" stroke="#666" stroke-width="0.6"/>
<!-- nav -->
<g fill="#777">
  <rect x="2.4" y="399.2" width="0.6" height="3.6"/><path d="M6.2,399.2 V402.8 L3.6,401 Z"/>
  <path d="M13.2,399.2 V402.8 L10.6,401 Z"/>
  <path d="M18.4,399.2 V402.8 L21,401 Z"/>
  <path d="M25.2,399.2 V402.8 L27.8,401 Z"/><rect x="28.4" y="399.2" width="0.6" height="3.6"/>
</g>
<!-- h-scroll -->
<g fill="#444"><rect x="401.2" y="398" width="0.8" height="0.8"/><rect x="401.2" y="400.6" width="0.8" height="0.8"/><rect x="401.2" y="403.2" width="0.8" height="0.8"/></g>
<path d="M409,399.2 V403 L406.4,401.1 Z" fill="#555"/>
<rect x="412" y="398.3" width="8.3" height="4.5" fill="#c9cbdc"/>
<path d="M773,399.5 V403 L775.4,401.2 Z" fill="#777"/>
<!-- bottom toolbar -->
<rect x="1" y="406" width="2" height="12" fill="url(#grip2)"/>
<rect x="18.3" y="407" width="0.6" height="10" fill="#d6d6de"/>
<rect x="45.8" y="407" width="0.6" height="10" fill="#d6d6de"/>
<rect x="111.6" y="407.5" width="0.6" height="10" fill="#d6d6de"/>
<!-- grey docs magnifier -->
<rect x="5.5" y="408.2" width="4.5" height="5" fill="#e4e4e4" stroke="#aaa" stroke-width="0.5"/>
<rect x="7.2" y="409.6" width="4.5" height="5" fill="#d4d4d4" stroke="#999" stroke-width="0.5"/>
<circle cx="11" cy="413" r="1.6" fill="#ccc" stroke="#888" stroke-width="0.5"/>
<path d="M12.2,414.2 L14,416" stroke="#777" stroke-width="0.7"/>
<!-- dim icons -->
<path d="M22.5,413.8 H30 M22.5,412.8 V414.8 M30,412.8 V414.8 M24.5,409.5 V412 M26.5,409.5 V412 M24.5,410.8 H26.5 M28,409.6 V412" stroke="#b0b0b0" stroke-width="0.5" fill="none"/>
<rect x="31.6" y="406.6" width="11.8" height="11.4" fill="#f2f2f4" stroke="#cfcfd6" stroke-width="0.6"/>
<path d="M33.2,414.2 H41.6 M33.2,413.2 V415.2 M41.6,413.2 V415.2 M35.5,409.6 V412.3 M37.5,409.6 V412.3 M35.5,411 H37.5" stroke="#b0b0b0" stroke-width="0.5" fill="none"/>
<!-- Max/Min -->
<rect x="114.4" y="407.4" width="11.6" height="11" fill="#f2f2f4" stroke="#cfcfd6" stroke-width="0.6"/>
<!-- vertical toolbar right -->
<rect x="787.4" y="52" width="12.6" height="178" fill="#eeeef2"/>
<rect x="789" y="53" width="11" height="1.6" fill="url(#grip2)"/>
<g fill="#e8f4fc" stroke="#94cdf0" stroke-width="0.9">
  <rect x="788.5" y="56.6" width="12" height="10.4"/>
  <rect x="788.5" y="67.8" width="12" height="10.7"/>
  <rect x="788.5" y="107" width="12" height="12.8"/>
</g>
<circle cx="793.8" cy="61.4" r="1.4" fill="#e0d030" stroke="#3a3a10" stroke-width="0.6"/>
<path d="M790.2,76.8 L797.4,69.8" stroke="#1a6060" stroke-width="0.9"/>
<rect x="789" y="81" width="11" height="0.6" fill="#d6d6de"/>
<path d="M790.2,92.6 L797.6,85.2" stroke="#d04040" stroke-width="0.8"/>
<path d="M790.6,92.4 L793,90" stroke="#4040d0" stroke-width="0.8"/>
<path d="M790.8,97 H797 M793.9,97 V103.6 M790.8,103.6 H797" stroke="#555" stroke-width="1.1"/>
<path d="M790.4,116 L797.2,110" stroke="#1818a0" stroke-width="2.8" stroke-linecap="round"/>
<path d="M791.6,114.4 L795.8,110.8" stroke="#6a8ae0" stroke-width="0.7"/>
<text x="789.4" y="129.2" font-size="5" font-family="Liberation Sans" fill="#222">N</text>
<path d="M793.5,131.2 L797.4,127.4" stroke="#e04040" stroke-width="0.7"/>
<circle cx="797" cy="127.6" r="0.8" fill="none" stroke="#e04040" stroke-width="0.5"/>
<text x="791.6" y="140.6" font-size="5" font-family="Liberation Sans" fill="#222">A</text>
<path d="M789.8,142.6 H798 M789.8,141.6 V142.6 M798,141.6 V142.6" stroke="#e04040" stroke-width="0.7" fill="none"/>
<text x="792" y="151.8" font-size="5" font-family="Liberation Sans" fill="#222">F</text>
<path d="M789.8,154 H798 M789.8,153 V154 M798,153 V154" stroke="#e04040" stroke-width="0.7" fill="none"/>
<rect x="789" y="160.5" width="11" height="0.6" fill="#d6d6de"/>
<path d="M790.2,170.6 L797.6,163.6" stroke="#3050d0" stroke-width="0.8"/>
<path d="M790.6,166.6 H797" stroke="#e04040" stroke-width="0.5"/>
<path d="M790,176.6 H795.4 V182" stroke="#222" stroke-width="0.8" fill="none"/>
<path d="M794,182.4 L796.3,179 L798.6,182.4 Z" fill="#d82020"/>
<path d="M790.2,182.6 H798.6" stroke="#d82020" stroke-width="0.6"/>
<rect x="790" y="189.2" width="5.4" height="1.8" fill="#111"/>
<path d="M794.5,190.6 L797.8,187.8" stroke="#6a6ae0" stroke-width="1.3"/>
<path d="M790,204 H798.4" stroke="#d82020" stroke-width="0.9"/>
<path d="M791.2,203.4 C791.6,200.6 797,200.6 797.2,203.4" fill="none" stroke="#999" stroke-width="0.6"/>
<rect x="789" y="210.8" width="11" height="0.6" fill="#d6d6de"/>
<path d="M791,214.4 H795.6 V221.6 H791 Z M792.6,216.5 H798 V222 H792.6" fill="none" stroke="#aaa" stroke-width="0.6"/>
<rect x="792.2" y="226.2" width="0.8" height="0.8" fill="#888"/>
</svg>
<div class="t" style="left:35.6px;top:398.1px;font-size:5.9px;font-weight:bold;color:#111;z-index:5">NTC18C-Modello</div>
<div class="t" style="left:50.2px;top:409.5px;font-size:5.9px;color:#9a9a9a;z-index:5">1575.00</div>
<div class="t" style="left:116px;top:410.8px;font-size:4.3px;color:#999;z-index:5">Max</div>
<div class="t" style="left:127.6px;top:410.8px;font-size:4.3px;color:#aaa;z-index:5">Min</div>
<div class="t" style="left:143px;top:410.2px;font-size:5.8px;color:#b0b0b0;z-index:5">V1</div>
<div class="t" style="left:154.8px;top:410.2px;font-size:5.8px;color:#b0b0b0;z-index:5">M1</div>
<div class="t" style="left:166.2px;top:410.2px;font-size:5.8px;color:#b0b0b0;z-index:5">V2</div>
<div class="t" style="left:178px;top:410.2px;font-size:5.8px;color:#b0b0b0;z-index:5">M2</div>
<div class="t" style="left:190px;top:410.2px;font-size:5.8px;color:#b0b0b0;z-index:5">AF</div>
<div class="t" style="left:201.2px;top:410.2px;font-size:5.8px;color:#b0b0b0;z-index:5">NT</div>
<svg width="800" height="420" style="z-index:5"><path d="M213.6,412.6 h1.6 l-0.8,0.8z" fill="#555"/></svg>
<div class="a" style="left:0;top:417.6px;width:800px;height:2.4px;background:linear-gradient(#dbe8f6,#a9bfdc)"></div>

</body></html>
